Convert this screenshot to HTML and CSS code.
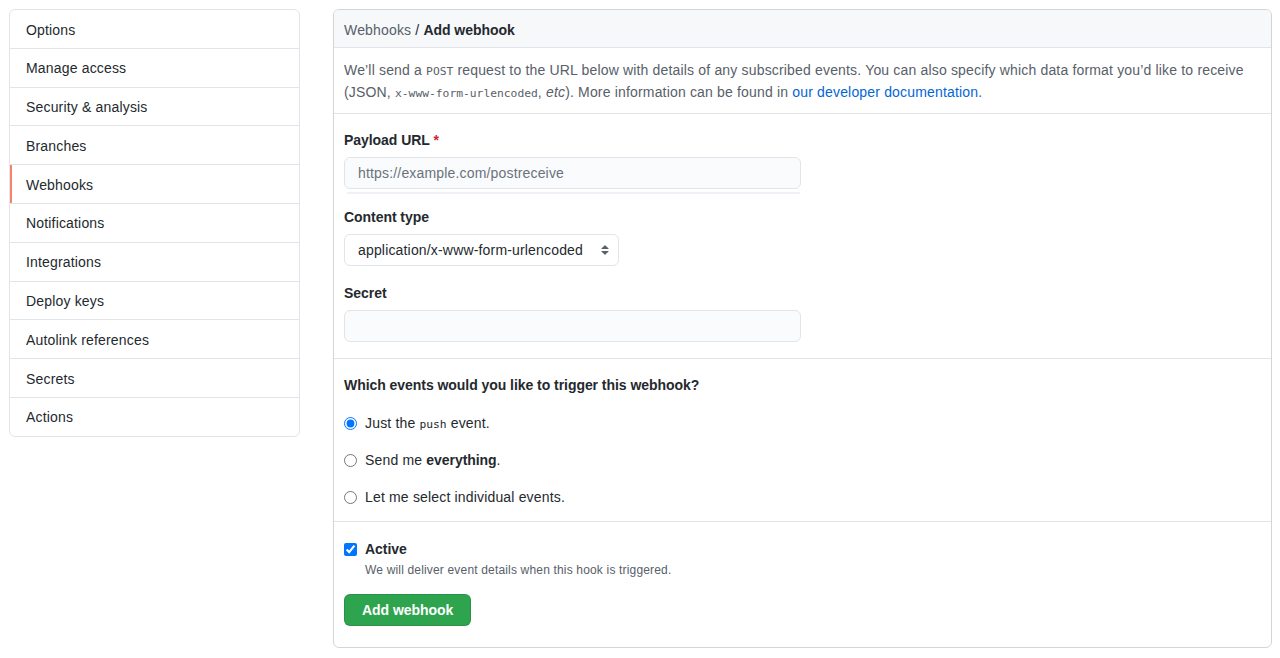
FILE: index.html
```html
<!DOCTYPE html>
<html lang="en">
<head>
<meta charset="utf-8">
<title>Add webhook</title>
<link rel="stylesheet" href="styles.css">
</head>
<body>
<div class="layout">
  <nav class="menu">
    <a class="menu-item">Options</a>
    <a class="menu-item">Manage access</a>
    <a class="menu-item">Security &amp; analysis</a>
    <a class="menu-item">Branches</a>
    <a class="menu-item selected">Webhooks</a>
    <a class="menu-item">Notifications</a>
    <a class="menu-item">Integrations</a>
    <a class="menu-item">Deploy keys</a>
    <a class="menu-item">Autolink references</a>
    <a class="menu-item">Secrets</a>
    <a class="menu-item">Actions</a>
  </nav>

  <div class="box">
    <div class="box-header"><span class="crumb">Webhooks</span> / <strong>Add webhook</strong></div>

    <div class="section intro">
      <p>We’ll send a <code>POST</code> request to the URL below with details of any subscribed events. You can also specify which data format you’d like to receive (JSON, <code>x-www-form-urlencoded</code>, <em>etc</em>). More information can be found in <a class="link">our developer documentation</a>.</p>
    </div>

    <div class="section fields">
      <div class="group first">
        <label class="label">Payload URL <span class="req">*</span></label>
        <input class="input wide" type="text" placeholder="https://example.com/postreceive">
        <div class="suggest"></div>
      </div>
      <div class="group">
        <label class="label">Content type</label>
        <select class="select">
          <option>application/x-www-form-urlencoded</option>
          <option>application/json</option>
        </select>
      </div>
      <div class="group">
        <label class="label">Secret</label>
        <input class="input wide" type="text">
      </div>
    </div>

    <div class="section events">
      <p class="question">Which events would you like to trigger this webhook?</p>
      <label class="radio-row"><input type="radio" name="ev" checked> <span>Just the <code>push</code> event.</span></label>
      <label class="radio-row"><input type="radio" name="ev"> <span>Send me <strong>everything</strong>.</span></label>
      <label class="radio-row"><input type="radio" name="ev"> <span>Let me select individual events.</span></label>
    </div>

    <div class="section final">
      <label class="check-row"><input type="checkbox" checked> <span class="check-label">Active</span></label>
      <p class="note">We will deliver event details when this hook is triggered.</p>
      <button class="btn-primary" type="button">Add webhook</button>
    </div>
  </div>
</div>
</body>
</html>
```

FILE: styles.css
```css
* { box-sizing: border-box; }

html, body {
  margin: 0;
  background: #ffffff;
}

body {
  font-family: "Liberation Sans", Arial, sans-serif;
  font-size: 14px;
  line-height: 20px;
  letter-spacing: 0.17px;
  color: #24292e;
}

strong, .label, .question, .check-label, .btn-primary {
  letter-spacing: -0.05px;
}

.layout {
  display: grid;
  grid-template-columns: 291px 939px;
  column-gap: 33px;
  padding: 9px 8px 0 9px;
  align-items: start;
}

/* Sidebar menu */
.menu {
  display: flex;
  flex-direction: column;
  border: 1px solid #e1e4e8;
  border-radius: 6px;
  overflow: hidden;
}

.menu-item {
  display: block;
  padding: 9.5px 16px 6.5px;
  line-height: 21.8px;
  border-bottom: 1px solid #e1e4e8;
  color: #24292e;
  text-decoration: none;
}

.menu-item:last-child { border-bottom: 0; }

.menu-item.selected {
  box-shadow: inset 2px 0 0 #f9826c;
}

/* Main box */
.box {
  border: 1px solid #d1d5da;
  border-radius: 6px;
  overflow: hidden;
}

.box-header {
  height: 38px;
  padding: 4px 10px 0;
  line-height: 33px;
  background: #f6f8fa;
  border-bottom: 1px solid #e1e4e8;
}

.crumb { color: #586069; }
.box-header strong { font-weight: 700; color: #24292e; }

.section {
  border-bottom: 1px solid #e1e4e8;
  padding: 0 10px;
}

.section:last-child { border-bottom: 0; }

.intro {
  padding-top: 11px;
  padding-bottom: 10px;
  color: #586069;
}

.intro p {
  margin: 0;
  line-height: 22px;
}

code {
  font-family: "DejaVu Sans Mono", "Liberation Mono", monospace;
  font-size: 11.3px;
  line-height: 1;
  letter-spacing: 0;
}

.link {
  color: #0366d6;
  text-decoration: none;
}

/* Fields */
.fields {
  padding-top: 16px;
  padding-bottom: 16px;
}

.group { margin-top: 17px; }
.group.first { margin-top: 0; }
.group.first + .group { margin-top: 18px; }

.label {
  display: block;
  font-weight: 700;
  line-height: 20px;
  color: #24292e;
  margin-bottom: 7px;
}

.req { color: #cb2431; }

.input {
  display: block;
  height: 32px;
  padding: 5px 13px;
  font: inherit;
  letter-spacing: 0.17px;
  color: #24292e;
  background: #fafbfc;
  border: 1px solid #e1e4e8;
  border-radius: 6px;
  outline: none;
}

.input::placeholder { color: #6a737d; }

.input.wide { width: 457px; }

.suggest {
  width: 453px;
  height: 2px;
  margin: 3px 0 -5px 3px;
  background: #eef2f7;
}

.select {
  display: block;
  width: 275px;
  height: 32px;
  padding: 0 24px 0 13px;
  font: inherit;
  letter-spacing: 0.17px;
  color: #24292e;
  background-color: #ffffff;
  background-image: url("data:image/svg+xml;utf8,<svg xmlns='http://www.w3.org/2000/svg' viewBox='0 0 16 16'><path fill='%23586069' d='M4.427 9.427l3.396 3.396a.25.25 0 00.354 0l3.396-3.396A.25.25 0 0011.396 9H4.604a.25.25 0 00-.177.427zM4.427 6.573l3.396-3.396a.25.25 0 01.354 0l3.396 3.396A.25.25 0 0111.396 7H4.604a.25.25 0 01-.177-.427z'/></svg>");
  background-repeat: no-repeat;
  background-position: right 5px center;
  background-size: 16px 16px;
  border: 1px solid #e1e4e8;
  border-radius: 6px;
  appearance: none;
  -webkit-appearance: none;
  outline: none;
}

/* Events */
.events {
  padding-top: 16px;
  padding-bottom: 14px;
}

.question {
  margin: 0 0 18px;
  font-weight: 700;
  line-height: 20px;
}

.radio-row {
  display: flex;
  align-items: center;
  height: 20px;
  margin-top: 17px;
  color: #24292e;
}

.question + .radio-row { margin-top: 0; }

.radio-row input {
  width: 13px;
  height: 13px;
  margin: 0 8px 0 0;
}

/* Final */
.final {
  padding-top: 17px;
  padding-bottom: 21px;
}

.check-row {
  display: flex;
  align-items: center;
  height: 20px;
}

.check-row input {
  width: 13px;
  height: 13px;
  margin: 0 8px 0 0;
}

.check-label { font-weight: 700; }

.note {
  margin: 2px 0 0 21px;
  font-size: 12px;
  line-height: 18px;
  color: #586069;
}

.btn-primary {
  display: block;
  margin-top: 15px;
  height: 32px;
  padding: 0 17px;
  font: inherit;
  font-weight: 700;
  color: #ffffff;
  background: #2ea44f;
  border: 1px solid rgba(27, 31, 35, 0.15);
  border-radius: 6px;
}
```
